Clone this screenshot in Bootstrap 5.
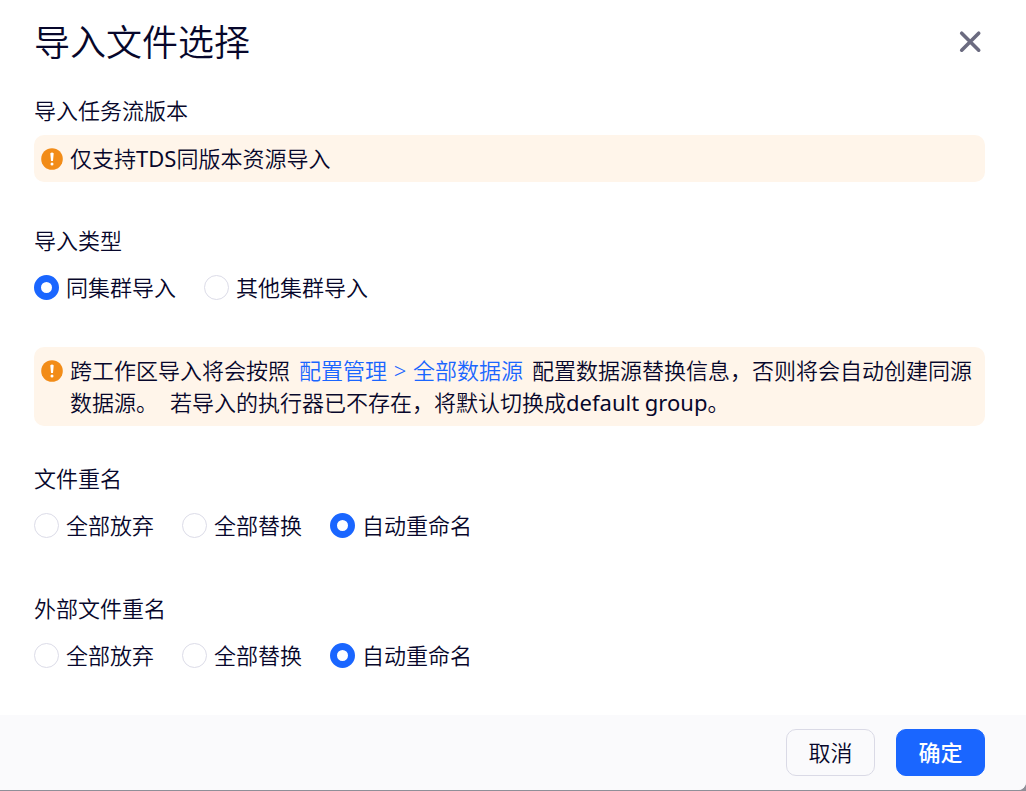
<!DOCTYPE html>
<html lang="zh-CN">
<head>
<meta charset="utf-8">
<meta name="viewport" content="width=device-width, initial-scale=1">
<title>导入文件选择</title>
<link href="https://cdn.jsdelivr.net/npm/bootstrap@5.3.0/dist/css/bootstrap.min.css" rel="stylesheet">
<style>
  body {
    font-family: "Noto Sans", "Noto Sans CJK SC", sans-serif;
    font-size: 22px;
    line-height: 32px;
    font-weight: 350;
    color: #07072b;
    background: #8f8f98;
  }
  .import-dialog {
    min-height: calc(100vh - 1px);
    background: #fff;
    border-bottom-right-radius: 8px;
    overflow: hidden;
  }
  .dialog-head { padding: 15px 41px 24px 34px; }
  .dialog-title { font-size: 36px; line-height: 55px; font-weight: 350; }
  .close-btn { width: 30px; height: 30px; color: #6b6b80; }
  .dialog-main { padding: 0 41px 43px 34px; }
  .section-label { font-size: 22px; line-height: 32px; font-weight: 350; margin-bottom: 9px; }
  legend.section-label { margin-bottom: 15px; }
  .notice {
    background: #fff5ea;
    border-radius: 10px;
    padding: 7px 4px 8px 7px;
    gap: 7px;
  }
  .notice svg { width: 22px; height: 22px; margin-top: 6px; }
  .notice a { color: #1a66ff; margin: 0 9px; }
  .crumb-sep { margin: 0 1px; }
  .second-part { margin-left: 12px; }
  .choices { gap: 0 28px; }
  .choice { gap: 7px; }
  .choice .form-check-input {
    width: 25px;
    height: 25px;
    border: 1px solid #dcdce8;
  }
  .choice .form-check-input:checked {
    background: #fff;
    border: 7px solid #1a66ff;
  }
  .dialog-foot { background: #fafafc; padding: 14px 41px; gap: 21px; }
  .foot-btn {
    width: 89px;
    height: 47px;
    padding: 0 0 2px;
    border-radius: 10px;
    font-size: 22px;
    line-height: 32px;
    font-weight: 350;
  }
  .foot-cancel { border-color: #dadae6; color: #07072b; }
  .foot-ok { background: #1a66ff; border-color: #1a66ff; color: #fff; font-weight: 500; }
  .after-notice { margin-bottom: 42px; }
  .gap-type { margin-bottom: 44px; }
  .gap-wide { margin-bottom: 51px; }
  .gap-info { margin-bottom: 36px; }
</style>
</head>
<body>
<div class="import-dialog d-flex flex-column">
  <header class="dialog-head d-flex justify-content-between align-items-center">
    <h1 class="dialog-title mb-0">导入文件选择</h1>
    <button type="button" class="close-btn btn p-0 border-0 d-flex" aria-label="关闭">
      <svg viewBox="0 0 30 30" width="30" height="30" fill="none" stroke="currentColor" stroke-width="3.600" stroke-linecap="round"><path d="M6.700 5.200 23.700 22.200M23.700 5.200 6.700 22.200"/></svg>
    </button>
  </header>

  <main class="dialog-main flex-grow-1">
    <section class="after-notice">
      <h2 class="section-label">导入任务流版本</h2>
      <div class="notice d-flex">
        <svg class="flex-shrink-0" viewBox="0 0 22 22" aria-hidden="true"><circle cx="11" cy="11" r="10.8" fill="#f28c18"/><path d="M9.3 5.2Q11 3.7 12.700 5.200L12 13H10z" fill="#fff"/><circle cx="11" cy="16" r="1.500" fill="#fff"/></svg>
        <div>仅支持<span class="fw-normal">TDS</span>同版本资源导入</div>
      </div>
    </section>

    <fieldset class="gap-type">
      <legend class="section-label">导入类型</legend>
      <div class="choices d-flex flex-wrap">
        <div class="choice d-flex align-items-center">
          <input class="form-check-input m-0" type="radio" name="kind" id="kind-same" checked>
          <label for="kind-same">同集群导入</label>
        </div>
        <div class="choice d-flex align-items-center">
          <input class="form-check-input m-0" type="radio" name="kind" id="kind-other">
          <label for="kind-other">其他集群导入</label>
        </div>
      </div>
    </fieldset>

    <div class="notice gap-info d-flex">
      <svg class="flex-shrink-0" viewBox="0 0 22 22" aria-hidden="true"><circle cx="11" cy="11" r="10.8" fill="#f28c18"/><path d="M9.3 5.2Q11 3.7 12.700 5.200L12 13H10z" fill="#fff"/><circle cx="11" cy="16" r="1.500" fill="#fff"/></svg>
      <div>跨工作区导入将会按照<a href="#" class="text-decoration-none">配置管理 <span class="crumb-sep">&gt;</span> 全部数据源</a>配置数据源替换信息，否则将会自动创建同源数据源。<span class="second-part">若导入的执行器已不存在，将默认切换成<span class="fw-normal">default group</span>。</span></div>
    </div>

    <fieldset class="gap-wide">
      <legend class="section-label">文件重名</legend>
      <div class="choices d-flex flex-wrap">
        <div class="choice d-flex align-items-center">
          <input class="form-check-input m-0" type="radio" name="file" id="file-skip">
          <label for="file-skip">全部放弃</label>
        </div>
        <div class="choice d-flex align-items-center">
          <input class="form-check-input m-0" type="radio" name="file" id="file-replace">
          <label for="file-replace">全部替换</label>
        </div>
        <div class="choice d-flex align-items-center">
          <input class="form-check-input m-0" type="radio" name="file" id="file-rename" checked>
          <label for="file-rename">自动重命名</label>
        </div>
      </div>
    </fieldset>

    <fieldset>
      <legend class="section-label">外部文件重名</legend>
      <div class="choices d-flex flex-wrap">
        <div class="choice d-flex align-items-center">
          <input class="form-check-input m-0" type="radio" name="ext" id="ext-skip">
          <label for="ext-skip">全部放弃</label>
        </div>
        <div class="choice d-flex align-items-center">
          <input class="form-check-input m-0" type="radio" name="ext" id="ext-replace">
          <label for="ext-replace">全部替换</label>
        </div>
        <div class="choice d-flex align-items-center">
          <input class="form-check-input m-0" type="radio" name="ext" id="ext-rename" checked>
          <label for="ext-rename">自动重命名</label>
        </div>
      </div>
    </fieldset>
  </main>

  <footer class="dialog-foot d-flex justify-content-end">
    <button type="button" class="btn foot-btn foot-cancel">取消</button>
    <button type="button" class="btn foot-btn foot-ok">确定</button>
  </footer>
</div>
<script src="https://cdn.jsdelivr.net/npm/bootstrap@5.3.0/dist/js/bootstrap.bundle.min.js"></script>
</body>
</html>
